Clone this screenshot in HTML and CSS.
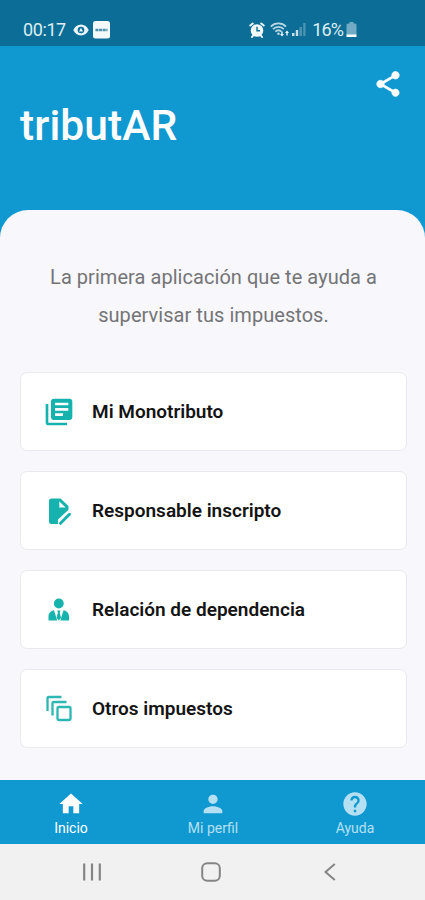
FILE: index.html
```
<!DOCTYPE html>
<html lang="es">
<head>
    <meta charset="UTF-8">
    <meta name="viewport" content="width=device-width, initial-scale=1.0">
    <title>tributAR</title>
    <link rel="stylesheet" href="styles.css">
</head>
<body>
    <div class="status-bar">
        <div class="status-left">
            <span class="clock">00:17</span>
            <svg class="eye" width="16" height="12" viewBox="0 0 16 12">
                <path fill="#e9f5fa" d="M8 .5C4.600.5 1.700 2.700.3 6c1.400 3.300 4.300 5.500 7.700 5.500s6.300-2.200 7.700-5.500C14.300 2.700 11.400.5 8 .5z"/>
                <circle cx="8" cy="6" r="3.300" fill="#0c6d96"/>
                <path fill="#e9f5fa" d="M8 3.800l2 3.600H6z"/>
            </svg>
            <svg class="app-badge" width="17" height="18" viewBox="0 0 17 18">
                <rect width="17" height="17.500" rx="2.500" fill="#f4fafc"/>
                <path stroke="#4c90ad" stroke-width="2.600" stroke-dasharray="3 .6" d="M2.500 9h12"/>
            </svg>
        </div>
        <div class="status-right">
            <svg width="16" height="16" viewBox="0 0 16 16">
                <circle cx="8" cy="8.500" r="6.300" fill="#f1f8fb"/>
                <path stroke="#f1f8fb" stroke-width="2" stroke-linecap="round" d="M1.300 3.500l2.400-2M14.700 3.500l-2.400-2M3 15l1.500-2M13 15l-1.500-2"/>
                <path fill="none" stroke="#0c6d96" stroke-width="1.400" d="M8 4.800v4h3"/>
            </svg>
            <svg class="wifi" width="20" height="16" viewBox="0 0 20 16">
                <g fill="none" stroke="#b9d8e5" stroke-width="1.800">
                    <path d="M.8 4.600C5 .4 11.800.4 16 4.600"/>
                    <path d="M3 7.200c3-3 7.800-3 10.800 0"/>
                    <path d="M5.300 9.700c1.800-1.700 4.400-1.700 6.200 0"/>
                </g>
                <circle cx="8.500" cy="11.800" r="1.300" fill="#b9d8e5"/>
                <path fill="#eef7fb" d="M10 12h1.300V9.500h1.400V12H14l-2 2.500zM15 11l2-2.500 2 2.500h-1.300v2.500h-1.400V11z"/>
            </svg>
            <svg class="signal" width="15" height="15" viewBox="0 0 15 15">
                <path fill="#c7e0ea" d="M1 11h2.500v3H1zM4.800 8h2.400v6H4.800z"/>
                <path fill="#4d95b3" d="M8.500 5H11v9H8.500zM12.200 1h2.300v13h-2.300z"/>
            </svg>
            <span class="percent">16%</span>
            <svg class="battery" width="11" height="16" viewBox="0 0 11 16">
                <path fill="#70abc3" d="M3.500 0h4v1.500H9q1.500 0 1.500 1.500v10H.5V3Q.5 1.500 2 1.500h1.500z"/>
                <path fill="#fff" d="M.5 12.500h10V15H.5z"/>
            </svg>
        </div>
    </div>

    <header class="header">
        <svg class="share" width="30" height="30" viewBox="0 0 24 24">
            <path fill="#fff" stroke="#fff" stroke-width=".5" d="M18 16.080c-.76 0-1.440.3-1.960.77L8.910 12.700c.05-.23.09-.46.09-.7s-.04-.47-.09-.7l7.050-4.110c.54.5 1.250.81 2.040.81 1.660 0 3-1.340 3-3s-1.340-3-3-3-3 1.340-3 3c0 .24.04.47.09.7L8.040 9.810C7.500 9.310 6.790 9 6 9c-1.660 0-3 1.340-3 3s1.340 3 3 3c.79 0 1.500-.31 2.040-.81l7.120 4.160c-.05.21-.08.43-.08.65 0 1.610 1.310 2.920 2.920 2.920s2.920-1.310 2.920-2.920-1.310-2.920-2.920-2.920z"/>
        </svg>
        <h1>tributAR</h1>
    </header>

    <main class="panel">
        <p class="intro">La primera aplicación que te ayuda a<br>supervisar tus impuestos.</p>

        <div class="card">
            <svg width="32" height="32" viewBox="0 0 24 24">
                <path fill="#16b3ae" d="M4 6H2v14c0 1.100.9 2 2 2h14v-2H4V6zm16-4H8c-1.100 0-2 .9-2 2v12c0 1.100.9 2 2 2h12c1.100 0 2-.9 2-2V4c0-1.100-.9-2-2-2zm-1 9H9V9h10v2zm-4 4H9v-2h6v2zm4-8H9V5h10v2z"/>
            </svg>
            <span class="card-text">Mi Monotributo</span>
        </div>
        <div class="card">
            <svg width="32" height="32" viewBox="0 0 32 32">
                <path fill="#16b3ae" d="M8.500 3.500h9l8 7.500v3.700L15 24.500V29H8.500Q6 29 6 26.500V6Q6 3.500 8.500 3.500z"/>
                <path fill="#fff" d="M16.300 6.500v6h6.400z"/>
                <path stroke="#16b3ae" stroke-width="3" stroke-linecap="round" d="M17.500 28.300l9-9"/>
            </svg>
            <span class="card-text">Responsable inscripto</span>
        </div>
        <div class="card">
            <svg width="32" height="32" viewBox="0 0 32 32">
                <circle cx="15.800" cy="9.500" r="4.900" fill="#16b3ae"/>
                <path fill="#16b3ae" d="M5.500 26.500v-4c0-3.500 2.300-5.500 5.500-6.200l3.200 10.200zM26 26.500v-4c0-3.500-2.300-5.500-5.500-6.200l-3.200 10.200z"/>
                <path fill="#16b3ae" d="M14.200 16.500h3.200l-.7 2.300 1.400 5-2.300 2.700-2.300-2.700 1.400-5z"/>
            </svg>
            <span class="card-text">Relación de dependencia</span>
        </div>
        <div class="card">
            <svg width="32" height="32" viewBox="0 0 32 32">
                <g fill="none" stroke="#2cb7b2" stroke-width="2.300">
                    <path d="M4.500 18V5.500Q4.500 4 6 4H18.500"/>
                    <path d="M9.500 22.500V10.500Q9.500 9 11 9H23.500"/>
                    <rect x="14.500" y="14" width="13" height="13" rx="1.200"/>
                </g>
            </svg>
            <span class="card-text">Otros impuestos</span>
        </div>
    </main>

    <nav class="tabs">
        <a class="tab active">
            <svg width="28" height="28" viewBox="0 0 24 24">
                <path fill="currentColor" d="M10 20v-6h4v6h5v-8h3L12 3 2 12h3v8z"/>
            </svg>
            <span>Inicio</span>
        </a>
        <a class="tab">
            <svg width="28" height="28" viewBox="0 0 24 24">
                <path fill="currentColor" d="M12 12c2.210 0 4-1.790 4-4s-1.790-4-4-4-4 1.790-4 4 1.790 4 4 4zm0 2c-2.670 0-8 1.340-8 4v2h16v-2c0-2.660-5.330-4-8-4z"/>
            </svg>
            <span>Mi perfil</span>
        </a>
        <a class="tab">
            <svg width="28" height="28" viewBox="0 0 24 24">
                <path fill="currentColor" d="M12 2C6.480 2 2 6.480 2 12s4.480 10 10 10 10-4.480 10-10S17.520 2 12 2zm1 17h-2v-2h2v2zm2.070-7.750l-.9.920C13.450 12.900 13 13.500 13 15h-2v-.5c0-1.100.45-2.100 1.170-2.830l1.240-1.260c.37-.36.590-.86.590-1.410 0-1.100-.9-2-2-2s-2 .9-2 2H8c0-2.210 1.790-4 4-4s4 1.790 4 4c0 .88-.36 1.680-.93 2.250z"/>
            </svg>
            <span>Ayuda</span>
        </a>
    </nav>

    <div class="system-nav">
        <svg width="20" height="20" viewBox="0 0 20 20">
            <path stroke="#858585" stroke-width="2.200" d="M2.200 1.500v17M10 1.500v17M17.800 1.500v17"/>
        </svg>
        <svg width="20" height="20" viewBox="0 0 20 20">
            <rect x="1.200" y="1.200" width="17.600" height="17.600" rx="5" fill="none" stroke="#858585" stroke-width="2"/>
        </svg>
        <svg width="20" height="20" viewBox="0 0 20 20">
            <path fill="none" stroke="#858585" stroke-width="2" d="M14.800 2L5.500 10l9.300 8"/>
        </svg>
    </div>
</body>
</html>
```

FILE: styles.css
```
* {
    box-sizing: border-box;
}
body {
    margin: 0;
    height: 900px;
    display: flex;
    flex-direction: column;
    font-family: Roboto, sans-serif;
    background-color: #1098d0;
    overflow: hidden;
}
svg {
    display: block;
    flex-shrink: 0;
}
.status-bar {
    height: 46px;
    padding: 12px 68px 0 23px;
    display: flex;
    justify-content: space-between;
    background-color: #0c6d96;
    color: #dcedf4;
    font-size: 18px;
    line-height: 35px;
}
.status-left, .status-right {
    display: flex;
    align-items: center;
    height: 35px;
}
.clock {
    letter-spacing: -0.4px;
}
.eye {
    margin-left: 7px;
}
.app-badge {
    margin-left: 4px;
}
.wifi {
    margin-left: 5px;
}
.signal {
    margin-left: 1px;
}
.percent {
    margin-left: 6px;
    letter-spacing: -0.9px;
}
.battery {
    margin-left: 3px;
}
.header {
    height: 164px;
    padding: 23px 20px 0;
}
.share {
    margin-left: auto;
    margin-right: 2px;
}
h1 {
    margin: 1px 0 0;
    color: #ffffff;
    font-size: 42.5px;
    font-weight: 500;
    line-height: 51px;
    letter-spacing: 0.1px;
}
.panel {
    height: 570px;
    padding: 48px 18px 0 20px;
    display: flex;
    flex-direction: column;
    gap: 20px;
    background-color: #f7f7fc;
    border-radius: 28px 28px 0 0;
}
.intro {
    margin: 0 0 18px;
    color: #747477;
    font-size: 20px;
    line-height: 38px;
    letter-spacing: 0.05px;
    text-align: center;
}
.card {
    height: 79px;
    padding: 0 22px;
    display: flex;
    align-items: center;
    gap: 17px;
    background-color: #ffffff;
    border: 1px solid #e9e9ee;
    border-radius: 7px;
}
.card-text {
    color: #141414;
    font-size: 19px;
    font-weight: 600;
}
.tabs {
    height: 64px;
    display: flex;
    background-color: #1098d0;
}
.tab {
    width: 142px;
    flex-shrink: 0;
    padding-top: 10px;
    display: flex;
    flex-direction: column;
    align-items: center;
    color: #b5e0f3;
    font-size: 14px;
    line-height: 20px;
}
.tab.active {
    color: #ffffff;
}
.system-nav {
    height: 56px;
    padding: 0 85px 0 82px;
    display: flex;
    align-items: center;
    justify-content: space-between;
    background-color: #f1f1f1;
}
```
